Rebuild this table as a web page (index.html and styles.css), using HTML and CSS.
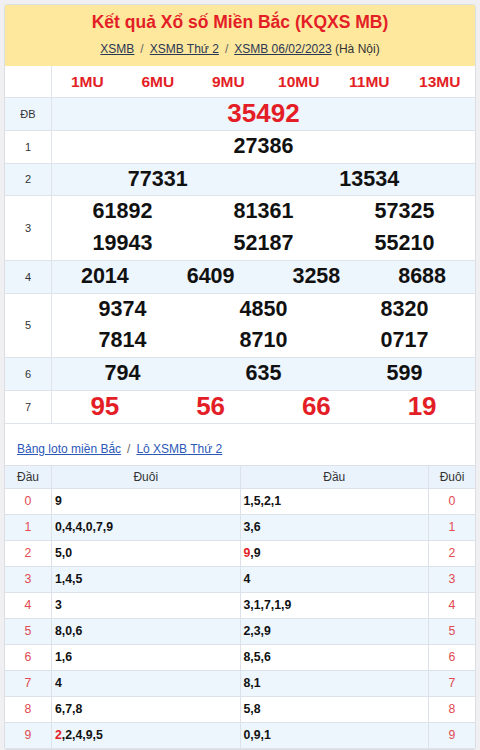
FILE: index.html
```html
<!DOCTYPE html>
<html lang="vi">
<head>
<meta charset="utf-8">
<title>KQXS MB</title>
<link rel="stylesheet" href="styles.css">
</head>
<body>
<div class="box">
  <div class="head">
    <h1 class="title">Kết quả Xổ số Miền Bắc (KQXS MB)</h1>
    <div class="crumb"><a href="#">XSMB</a><span class="sep">/</span><a href="#">XSMB Thứ 2</a><span class="sep">/</span><a href="#">XSMB 06/02/2023</a> (Hà Nội)</div>
  </div>
  <table class="kq">
    <tr class="codes">
      <td class="lbl"></td>
      <td><div class="g g6"><span>1MU</span><span>6MU</span><span>9MU</span><span>10MU</span><span>11MU</span><span>13MU</span></div></td>
    </tr>
    <tr class="alt">
      <td class="lbl">ĐB</td>
      <td><div class="g g1 db"><span>35492</span></div></td>
    </tr>
    <tr>
      <td class="lbl">1</td>
      <td><div class="g g1"><span>27386</span></div></td>
    </tr>
    <tr class="alt">
      <td class="lbl">2</td>
      <td><div class="g g2"><span>77331</span><span>13534</span></div></td>
    </tr>
    <tr>
      <td class="lbl">3</td>
      <td><div class="g g3"><span>61892</span><span>81361</span><span>57325</span><span>19943</span><span>52187</span><span>55210</span></div></td>
    </tr>
    <tr class="alt">
      <td class="lbl">4</td>
      <td><div class="g g4"><span>2014</span><span>6409</span><span>3258</span><span>8688</span></div></td>
    </tr>
    <tr>
      <td class="lbl">5</td>
      <td><div class="g g3"><span>9374</span><span>4850</span><span>8320</span><span>7814</span><span>8710</span><span>0717</span></div></td>
    </tr>
    <tr class="alt">
      <td class="lbl">6</td>
      <td><div class="g g3"><span>794</span><span>635</span><span>599</span></div></td>
    </tr>
    <tr>
      <td class="lbl">7</td>
      <td><div class="g g4 db"><span>95</span><span>56</span><span>66</span><span>19</span></div></td>
    </tr>
  </table>
  <div class="links"><a href="#">Bảng loto miền Bắc</a><span class="sep">/</span><a href="#">Lô XSMB Thứ 2</a></div>
  <table class="loto">
    <tr class="th"><td>Đầu</td><td>Đuôi</td><td>Đầu</td><td>Đuôi</td></tr>
    <tr><td class="n">0</td><td class="v">9</td><td class="v">1,5,2,1</td><td class="n">0</td></tr>
    <tr class="alt"><td class="n">1</td><td class="v">0,4,4,0,7,9</td><td class="v">3,6</td><td class="n">1</td></tr>
    <tr><td class="n">2</td><td class="v">5,0</td><td class="v"><b class="hot">9</b>,9</td><td class="n">2</td></tr>
    <tr class="alt"><td class="n">3</td><td class="v">1,4,5</td><td class="v">4</td><td class="n">3</td></tr>
    <tr><td class="n">4</td><td class="v">3</td><td class="v">3,1,7,1,9</td><td class="n">4</td></tr>
    <tr class="alt"><td class="n">5</td><td class="v">8,0,6</td><td class="v">2,3,9</td><td class="n">5</td></tr>
    <tr><td class="n">6</td><td class="v">1,6</td><td class="v">8,5,6</td><td class="n">6</td></tr>
    <tr class="alt"><td class="n">7</td><td class="v">4</td><td class="v">8,1</td><td class="n">7</td></tr>
    <tr><td class="n">8</td><td class="v">6,7,8</td><td class="v">5,8</td><td class="n">8</td></tr>
    <tr class="alt"><td class="n">9</td><td class="v"><b class="hot">2</b>,2,4,9,5</td><td class="v">0,9,1</td><td class="n">9</td></tr>
  </table>
</div>
</body>
</html>
```
FILE: styles.css
```css
html, body {
  margin: 0;
  padding: 0;
  background: #f0f0f3;
  font-family: "Liberation Sans", Arial, sans-serif;
  color: #222;
}
body {
  padding: 4px 4px 0 4px;
}
.box {
  width: 470px;
  border: 1px solid #dcdee4;
  border-radius: 3px;
  background: #fff;
}
.head {
  background: #fde89e;
  height: 61px;
  text-align: center;
  padding-top: 1px;
  box-sizing: border-box;
}
.title {
  margin: 0;
  padding-top: 4px;
  font-size: 17.5px;
  line-height: 24px;
  font-weight: bold;
  color: #e31e26;
}
.crumb {
  margin-top: 7px;
  font-size: 12px;
  line-height: 16px;
  color: #333;
}
.crumb a {
  color: #2b3755;
  text-decoration: underline;
}
.sep {
  color: #666;
  margin: 0 6px;
}
table {
  border-collapse: collapse;
  width: 100%;
  table-layout: fixed;
}
.kq td {
  border-top: 1px solid #dfe3ea;
  padding: 0;
  vertical-align: middle;
}
.kq tr:first-child td {
  border-top: none;
}
.kq .lbl {
  width: 46px;
  border-right: 1px solid #dfe3ea;
  text-align: center;
  font-size: 11px;
  color: #333;
}
.alt td {
  background: #edf5fd;
}
.codes td {
  background: #fff;
}
.g {
  display: grid;
  text-align: center;
  font-weight: bold;
  font-size: 21.5px;
  color: #111;
}
.g span {
  display: block;
  height: 31.75px;
  line-height: 31.75px;
}
.g1 { grid-template-columns: 1fr; }
.g2 { grid-template-columns: repeat(2, 1fr); }
.g3 { grid-template-columns: repeat(3, 1fr); }
.g4 { grid-template-columns: repeat(4, 1fr); }
.g6 { grid-template-columns: repeat(6, 1fr); }
.codes .g {
  font-size: 15.5px;
  color: #e31e26;
}
.codes .g span {
  height: 31px;
  line-height: 31px;
}
.g.db {
  color: #e31e26;
  font-size: 26px;
}
.links {
  border-top: 1px solid #dfe3ea;
  padding: 17px 12px 8px;
  font-size: 12px;
  line-height: 16px;
}
.links a {
  color: #2c58b8;
  text-decoration: underline;
}
.loto td {
  border: 1px solid #dde2ea;
  height: 25px;
  padding: 0 3px;
  font-size: 12.3px;
}
.loto tr td:first-child { border-left: none; }
.loto tr td:last-child { border-right: none; }
.loto td:nth-child(1), .loto td:nth-child(4) {
  width: 40px;
  text-align: center;
}
.loto .th td {
  height: 22px;
  background: #eaf3fc;
  text-align: center;
  color: #333;
  font-size: 12px;
}
.loto .n {
  color: #e04a50;
}
.loto .v {
  font-weight: bold;
  color: #111;
}
.hot {
  color: #e31e26;
}
```
